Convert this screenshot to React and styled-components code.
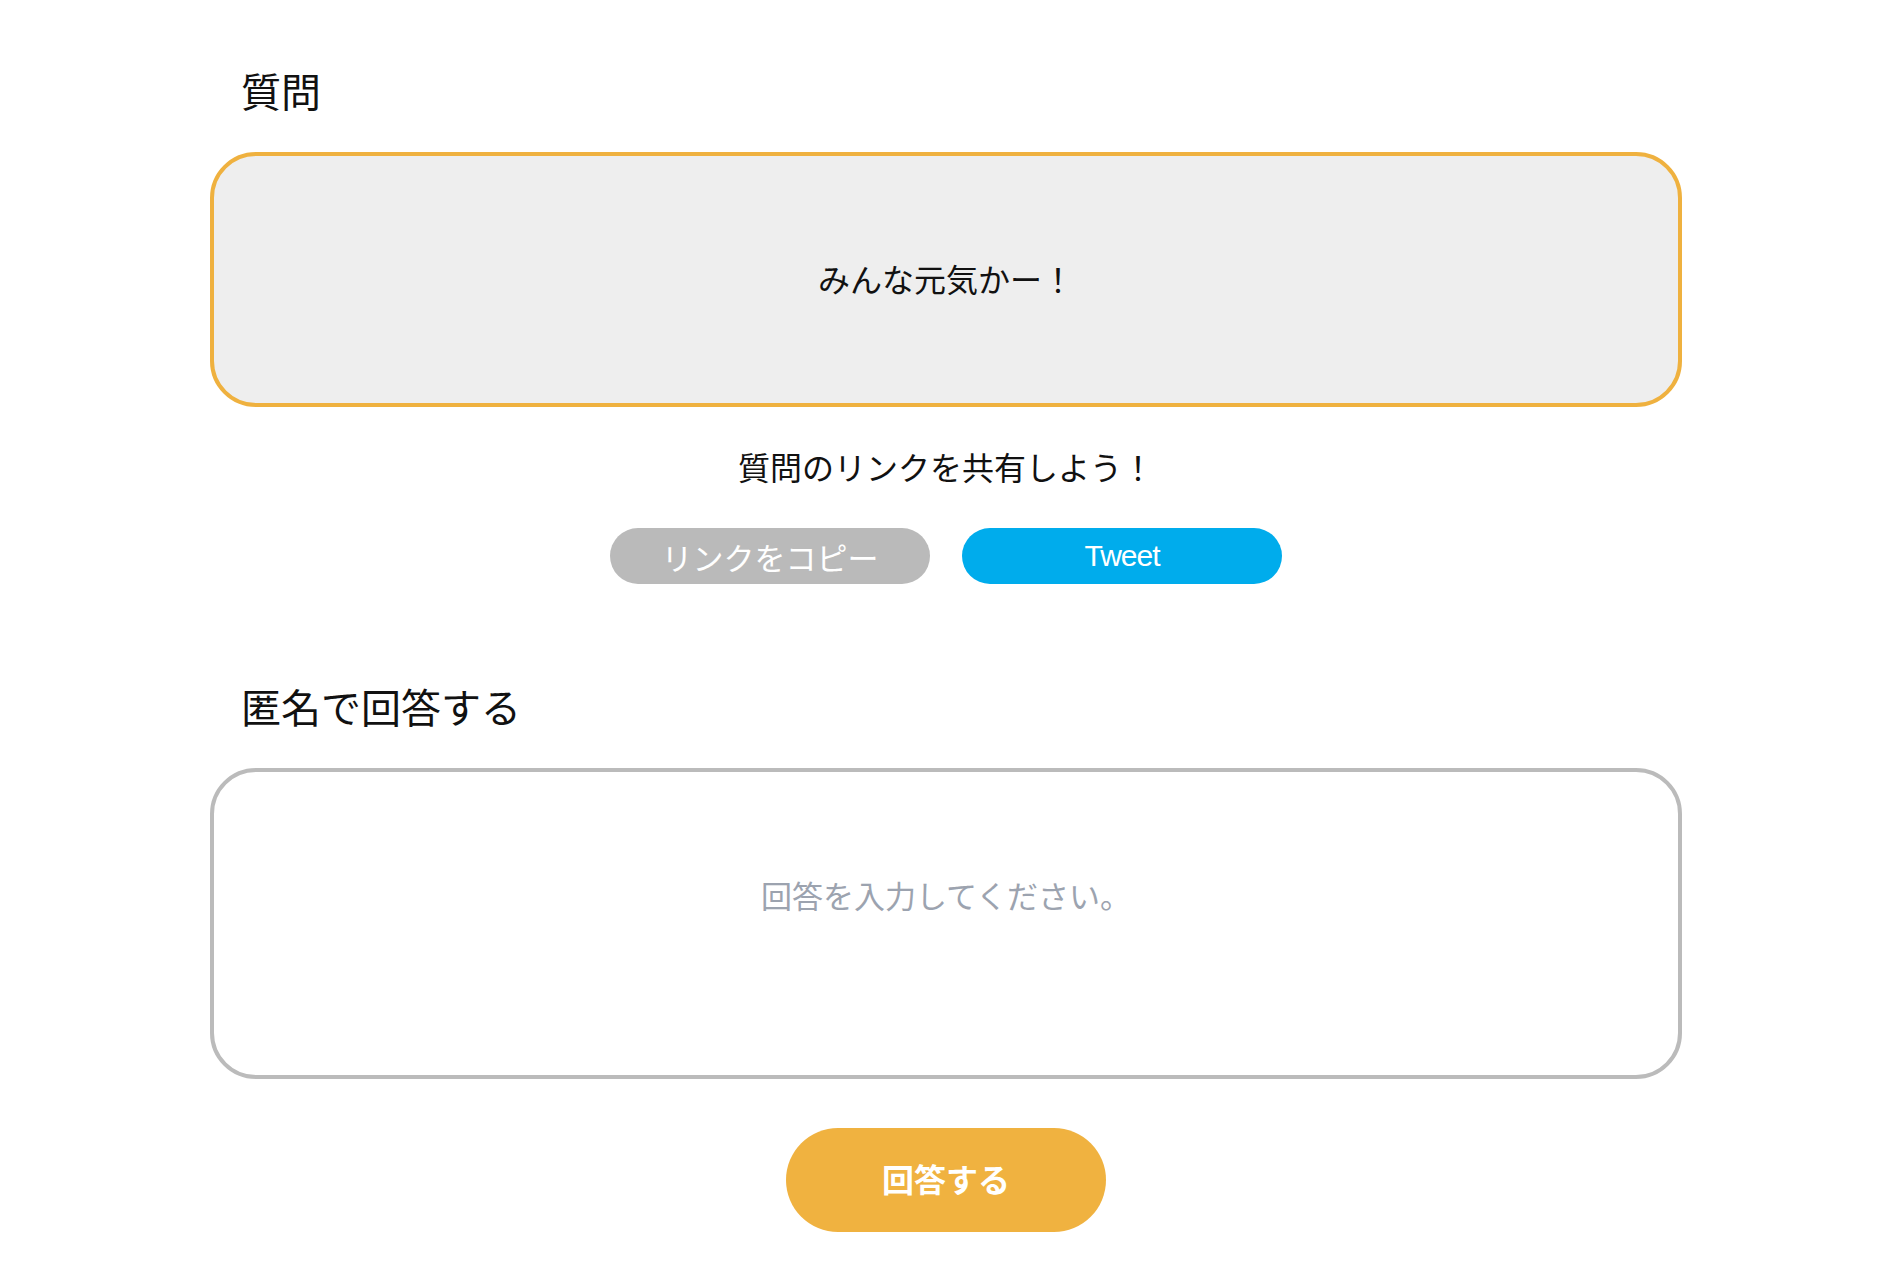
import styled, { createGlobalStyle } from "styled-components";

const GlobalStyle = createGlobalStyle`
  body {
    margin: 0;
    background: #ffffff;
    font-family: "Noto Sans CJK JP", "Noto Sans", sans-serif;
    color: #111111;
  }
`;

const Page = styled.div`
  padding: 0 12px 60px 0;
`;

const Container = styled.main`
  width: 1472px;
  margin: 0 auto;
  padding-top: 60px;
  display: flex;
  flex-direction: column;
  align-items: stretch;
`;

const Heading = styled.h2`
  margin: ${(p) => (p.$spaced ? "92px" : "0")} 0 0;
  padding-left: 31px;
  font-size: 40px;
  font-weight: 400;
  line-height: 60px;
`;

const QuestionBox = styled.div`
  box-sizing: border-box;
  margin-top: 32px;
  height: 255px;
  padding-bottom: 4px;
  border: 4px solid #efb13f;
  border-radius: 46px;
  background: #eeeeee;
  display: flex;
  align-items: center;
  justify-content: center;
  font-size: 32px;
  color: #111111;
`;

const ShareText = styled.p`
  margin: 35px 0 0;
  text-align: center;
  font-size: 32px;
  line-height: 48px;
`;

const ButtonRow = styled.div`
  margin-top: 38px;
  display: flex;
  justify-content: center;
  gap: 32px;
`;

const PillButton = styled.button`
  width: 320px;
  height: 56px;
  border: none;
  border-radius: 28px;
  background: ${(p) => (p.$tweet ? "#00acec" : "#bababa")};
  color: #ffffff;
  font-family: ${(p) =>
    p.$tweet
      ? '"Liberation Sans", Arial, sans-serif'
      : '"Noto Sans CJK JP", sans-serif'};
  font-size: ${(p) => (p.$tweet ? "30px" : "31px")};
  font-weight: 400;
  letter-spacing: ${(p) => (p.$tweet ? "-1px" : "0")};
  cursor: pointer;
  padding: 0;
`;

const AnswerInput = styled.textarea`
  box-sizing: border-box;
  margin-top: 32px;
  height: 311px;
  width: 100%;
  padding: 100px 40px 0;
  border: 4px solid #bbbbbb;
  border-radius: 46px;
  background: #ffffff;
  resize: none;
  outline: none;
  text-align: center;
  font-family: "Noto Sans CJK JP", sans-serif;
  font-size: 31px;
  line-height: 45px;
  color: #111111;

  &::placeholder {
    color: #9ca3af;
  }
`;

const SubmitButton = styled.button`
  align-self: center;
  margin-top: 49px;
  width: 320px;
  height: 104px;
  padding: 0 0 4px;
  border: none;
  border-radius: 52px;
  background: #f0b240;
  color: #ffffff;
  font-family: "Noto Sans CJK JP", sans-serif;
  font-size: 32px;
  font-weight: 700;
  cursor: pointer;
`;

function App() {
  return (
    <Page>
      <GlobalStyle />
      <Container>
        <Heading>質問</Heading>
        <QuestionBox>みんな元気かー！</QuestionBox>
        <ShareText>質問のリンクを共有しよう！</ShareText>
        <ButtonRow>
          <PillButton>リンクをコピー</PillButton>
          <PillButton $tweet>Tweet</PillButton>
        </ButtonRow>
        <Heading $spaced>匿名で回答する</Heading>
        <AnswerInput placeholder="回答を入力してください。" />
        <SubmitButton>回答する</SubmitButton>
      </Container>
    </Page>
  );
}

export default App;
